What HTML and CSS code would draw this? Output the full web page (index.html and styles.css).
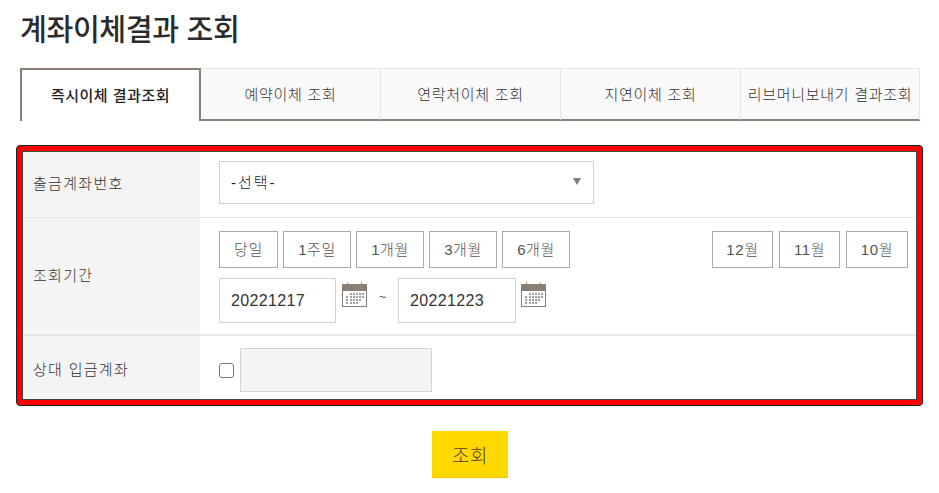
FILE: index.html
```html
<!DOCTYPE html>
<html lang="ko">
  <head>
    <meta charset="UTF-8" />
    <title>계좌이체결과 조회</title>
    <link rel="stylesheet" href="styles.css">
  </head>
  <body>
    <div class="container">
      <h1>계좌이체결과 조회</h1>
      <ul class="tabs">
        <li class="tab active">즉시이체 결과조회</li>
        <li class="tab">예약이체 조회</li>
        <li class="tab">연락처이체 조회</li>
        <li class="tab">지연이체 조회</li>
        <li class="tab last">리브머니보내기 결과조회</li>
      </ul>

      <div class="frame">
        <div class="table">
          <div class="row row-account">
            <div class="label">출금계좌번호</div>
            <div class="field">
              <div class="select">
                <span>-선택-</span>
                <span class="arrow"></span>
              </div>
            </div>
          </div>

          <div class="row row-period">
            <div class="label">조회기간</div>
            <div class="field field-period">
              <div class="btn-line">
                <div class="btn-group">
                  <button class="btn w59">당일</button>
                  <button class="btn w68">1주일</button>
                  <button class="btn w68">1개월</button>
                  <button class="btn w68">3개월</button>
                  <button class="btn w68">6개월</button>
                </div>
                <div class="btn-group months">
                  <button class="btn w61">12월</button>
                  <button class="btn w61">11월</button>
                  <button class="btn w62">10월</button>
                </div>
              </div>
              <div class="date-line">
                <div class="date-input w117">20221217</div>
                <svg class="cal" viewBox="0 0 25 25" aria-hidden="true">
                  <path d="M5 0h1v3H5zM19 0h1v3h-1z" fill="#a89f94" />
                  <rect x="0" y="2" width="25" height="23" fill="#8b7f74" />
                  <rect x="1" y="9" width="23" height="15" fill="#fff" />
                  <path d="M8 11h2v2H8zM11 11h2v2h-2zM14 11h2v2h-2zM17 11h2v2h-2zM20 11h2v2h-2zM4 14h2v2H4zM8 14h2v2H8zM11 14h2v2h-2zM14 14h2v2h-2zM17 14h2v2h-2zM20 14h2v2h-2zM4 17h2v2H4zM8 17h2v2H8zM11 17h2v2h-2zM14 17h2v2h-2zM17 17h2v2h-2zM4 20h2v2H4zM8 20h2v2H8zM11 20h2v2h-2zM14 20h2v2h-2z" fill="#a0a0a0" />
                </svg>
                <span class="tilde">~</span>
                <div class="date-input w118">20221223</div>
                <svg class="cal cal-end" viewBox="0 0 25 25" aria-hidden="true">
                  <path d="M5 0h1v3H5zM19 0h1v3h-1z" fill="#a89f94" />
                  <rect x="0" y="2" width="25" height="23" fill="#8b7f74" />
                  <rect x="1" y="9" width="23" height="15" fill="#fff" />
                  <path d="M8 11h2v2H8zM11 11h2v2h-2zM14 11h2v2h-2zM17 11h2v2h-2zM20 11h2v2h-2zM4 14h2v2H4zM8 14h2v2H8zM11 14h2v2h-2zM14 14h2v2h-2zM17 14h2v2h-2zM20 14h2v2h-2zM4 17h2v2H4zM8 17h2v2H8zM11 17h2v2h-2zM14 17h2v2h-2zM17 17h2v2h-2zM4 20h2v2H4zM8 20h2v2H8zM11 20h2v2h-2zM14 20h2v2h-2z" fill="#a0a0a0" />
                </svg>
              </div>
            </div>
          </div>

          <div class="row row-target">
            <div class="label">상대 입금계좌</div>
            <div class="field field-target">
              <span class="check"></span>
              <div class="disabled-input"></div>
            </div>
          </div>
        </div>
      </div>

      <div class="submit-line">
        <button class="submit">조회</button>
      </div>
    </div>
  </body>
</html>
```

FILE: styles.css
```css
* {
  margin: 0;
  padding: 0;
  box-sizing: border-box;
  font-family: "Liberation Sans", "Noto Sans CJK KR", sans-serif;
}

html,
body {
  height: 493px;
  overflow: hidden;
  background-color: #fff;
}

.container {
  width: 924px;
  padding-left: 16px;
}

h1 {
  height: 68px;
  margin-left: 4px;
  padding-top: 9px;
  color: #2b2b2b;
  font-size: 29.2px;
  font-weight: 500;
  line-height: 43px;
  letter-spacing: -0.4px;
}

.tabs {
  display: flex;
  width: 900px;
  height: 53px;
  margin-left: 4px;
  list-style: none;
}

.tab {
  display: flex;
  flex: none;
  align-items: center;
  justify-content: center;
  width: 180px;
  padding-bottom: 2px;
  background-color: #f9f9f9;
  border-top: 1px solid #e6e6e6;
  border-right: 1px solid #e6e6e6;
  border-bottom: 2px solid #8b7f74;
  color: #333;
  font-size: 15px;
  font-weight: 300;
  letter-spacing: 0.7px;
  white-space: nowrap;
}

.tab.active {
  width: 181px;
  padding-bottom: 3px;
  background-color: #fff;
  border: 2px solid #8b7f74;
  border-bottom: none;
  color: #222;
  font-weight: 500;
  letter-spacing: 0.5px;
}

.tab.last {
  width: 179px;
}

.frame {
  width: 907px;
  height: 261px;
  margin-top: 24px;
  background-color: #f00;
  border: 1px solid #222;
  border-radius: 4px;
  padding: 5px;
}

.table {
  border: 1px solid #444;
  background-color: #fff;
}

.row {
  display: flex;
}

.row-account {
  height: 66px;
  border-bottom: 1px solid #e6e6e6;
}

.row-period {
  height: 118px;
  border-bottom: 2px solid #e6e6e6;
}

.row-target {
  height: 63px;
}

.label {
  display: flex;
  flex: none;
  align-items: center;
  width: 177px;
  padding-left: 10px;
  background-color: #f4f4f4;
  color: #333;
  font-size: 15px;
  font-weight: 300;
  letter-spacing: 1.3px;
}

.row-account .label {
  padding-bottom: 4px;
}

.row-period .label {
  padding-bottom: 3px;
}

.row-target .label {
  padding-top: 2px;
}

.field {
  flex: 1;
  padding-left: 19px;
}

.row-account .field {
  padding-top: 9px;
}

.select {
  display: flex;
  align-items: center;
  justify-content: space-between;
  width: 375px;
  height: 43px;
  padding: 0 12px 2px 11px;
  border: 1px solid #d2d2d2;
  color: #222;
  font-size: 15px;
  font-weight: 300;
  letter-spacing: 2px;
}

.arrow {
  width: 0;
  height: 0;
  border-left: 4.5px solid transparent;
  border-right: 4.5px solid transparent;
  border-top: 7px solid #808080;
}

.field-period {
  padding-top: 13px;
  padding-right: 8px;
}

.btn-line {
  display: flex;
  justify-content: space-between;
}

.btn-group {
  display: flex;
  gap: 5px;
}

.months {
  gap: 6px;
}

.btn {
  height: 37px;
  padding-bottom: 2px;
  background-color: #fff;
  border: 1px solid #aaa;
  color: #555;
  font-size: 15px;
  font-weight: 300;
  letter-spacing: 0.6px;
}

.w59 {
  width: 59px;
}

.w61 {
  width: 61px;
}

.w62 {
  width: 62px;
}

.w68 {
  width: 68px;
}

.date-line {
  display: flex;
  align-items: flex-start;
  margin-top: 10px;
}

.date-input {
  display: flex;
  align-items: center;
  height: 45px;
  padding-left: 11px;
  border: 1px solid #d2d2d2;
  color: #333;
  font-size: 16px;
  letter-spacing: 0.35px;
}

.w117 {
  width: 117px;
}

.w118 {
  width: 118px;
}

.cal {
  flex: none;
  width: 25px;
  height: 25px;
  margin: 4px 0 0 6px;
}

.cal-end {
  margin-left: 5px;
}

.tilde {
  width: 31px;
  padding-top: 11px;
  color: #555;
  font-size: 13px;
  text-align: center;
}

.field-target {
  display: flex;
  align-items: center;
  gap: 6px;
  padding-top: 5px;
}

.check {
  flex: none;
  width: 15px;
  height: 15px;
  background-color: #fff;
  border: 1px solid #767676;
  border-radius: 3px;
}

.disabled-input {
  width: 192px;
  height: 44px;
  background-color: #f4f4f4;
  border: 1px solid #d2d2d2;
}

.submit-line {
  display: flex;
  justify-content: center;
  width: 908px;
  margin-top: 25px;
}

.submit {
  width: 76px;
  height: 47px;
  background-color: #ffd800;
  border: none;
  border-bottom: 1px solid #f0c000;
  color: #4a3f30;
  font-size: 19px;
  font-weight: 300;
  letter-spacing: 0.5px;
}
```
